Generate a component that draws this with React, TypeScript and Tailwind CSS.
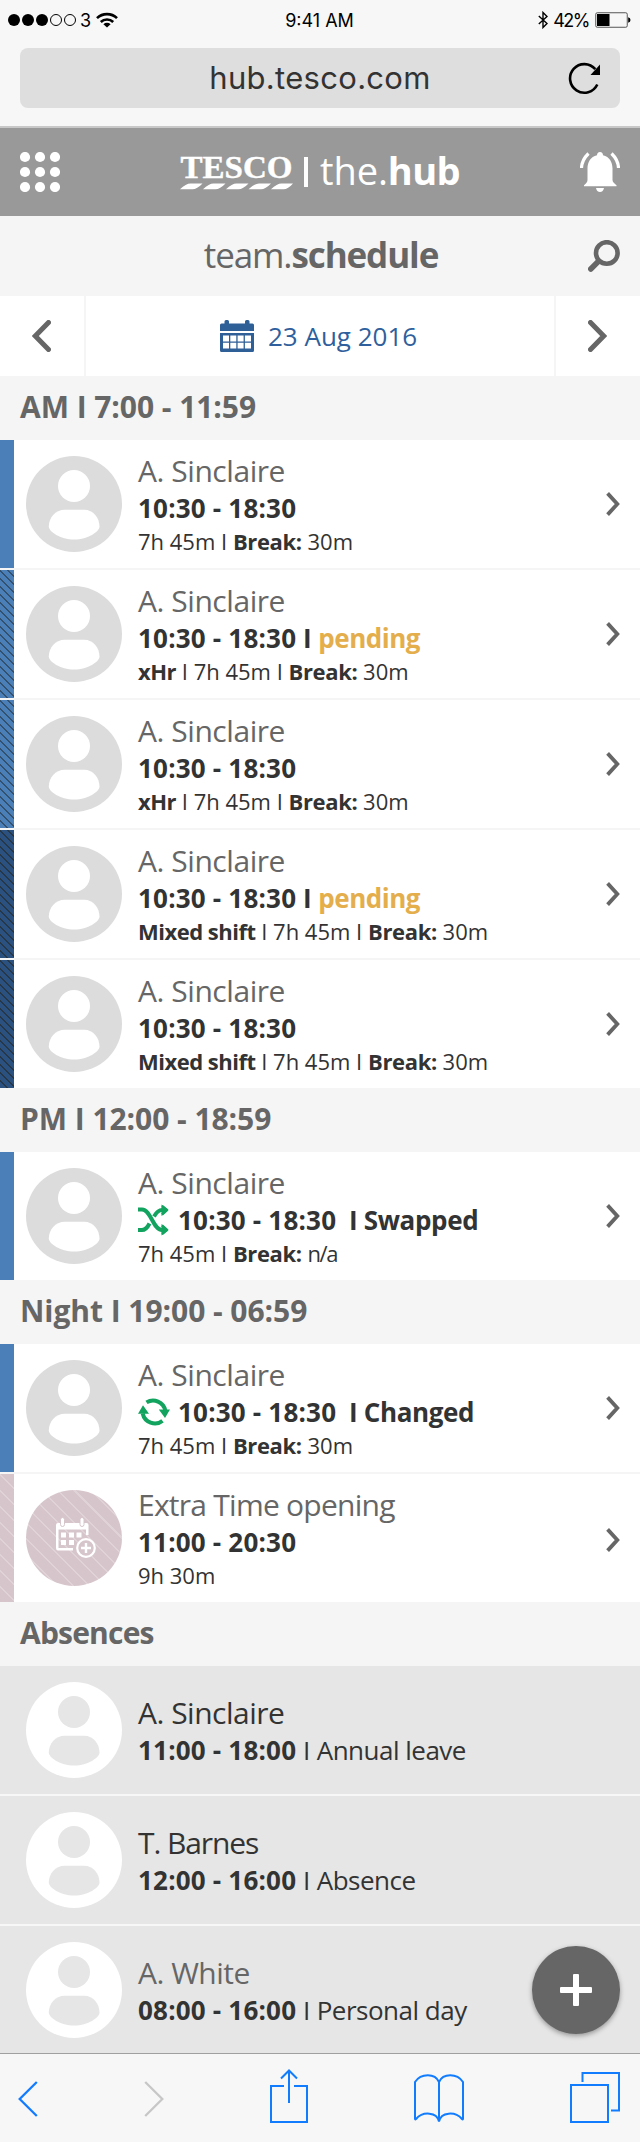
import type { ReactNode } from "react";

type Stripe = "solid" | "hatch" | "dark" | "rose";

const STRIPES: Record<Stripe, string> = {
  solid: "bg-[#4b7fb8]",
  hatch: "bg-[repeating-linear-gradient(45deg,#4b7fb8_0px,#4b7fb8_4.3px,#34506f_4.3px,#34506f_5.66px)]",
  dark: "bg-[repeating-linear-gradient(45deg,#2a5180_0px,#2a5180_4.3px,#263747_4.3px,#263747_5.66px)]",
  rose: "bg-[repeating-linear-gradient(45deg,#d6c5cb_0px,#d6c5cb_9.9px,#e0d3d8_9.9px,#e0d3d8_11.4px)]",
};

function Avatar({ bg, fg }: { bg: string; fg: string }) {
  return (
    <svg width="96" height="96" viewBox="0 0 96 96" className="shrink-0">
      <circle cx="48" cy="48" r="48" fill={bg} />
      <circle cx="48" cy="30" r="16" fill={fg} />
      <path
        d="M39 53.7H58C67.5 53.7 73.5 62 73.5 70.5C73.5 75.5 62 83.5 48.2 83.5C34 83.5 22.8 75.5 22.8 70.5C22.8 62 29 53.7 39 53.7Z"
        fill={fg}
      />
    </svg>
  );
}

function ExtraTimeAvatar() {
  return (
    <div className="flex size-24 shrink-0 items-center justify-center rounded-full bg-[repeating-linear-gradient(45deg,#d6c5cb_0px,#d6c5cb_9.9px,#e0d3d8_9.9px,#e0d3d8_11.4px)]">
      <svg width="42" height="42" viewBox="0 0 42 42" fill="#fff" className="ml-[3px]">
        <path d="M3 6H31.5Q33.5 6 33.5 8V18H31V12.5H3.5V31H18V33.5H3Q1 33.5 1 31V8Q1 6 3 6Z" />
        <rect x="5.5" y="0.5" width="4" height="9" rx="2" stroke="#d6c5cb" strokeWidth="1" />
        <rect x="25" y="0.5" width="4" height="9" rx="2" stroke="#d6c5cb" strokeWidth="1" />
        <path d="M6 15.5h5v5H6zM14 15.5h5v5h-5zM21.5 15.5h5v5h-5zM6 23h5v5H6zM14 23h5v5h-5z" />
        <circle cx="31" cy="31" r="8.8" fill="#d6c5cb" stroke="#fff" strokeWidth="2.2" />
        <path d="M29.8 26h2.4v3.8H36v2.4h-3.8V36h-2.4v-3.8H26v-2.4h3.8z" />
      </svg>
    </div>
  );
}

function Chevron({ low }: { low?: boolean }) {
  return (
    <svg
      width="14"
      height="24"
      viewBox="0 0 14 24"
      fill="none"
      stroke="#666"
      strokeWidth="3.8"
      className={low ? "mt-1 shrink-0" : "shrink-0"}
    >
      <path d="M1.6 1.4L11.3 12L1.6 22.6" />
    </svg>
  );
}

function SectionHeader({ children, tight }: { children: ReactNode; tight?: boolean }) {
  return (
    <h2
      className={
        "flex h-16 items-center bg-[#f5f5f5] pb-1 pl-5 text-[30px] font-bold text-[#666] " +
        (tight ? "tracking-[-0.8px]" : "tracking-[-0.05px]")
      }
    >
      {children}
    </h2>
  );
}

function Shift({
  stripe,
  name = "A. Sinclaire",
  avatar,
  time = "10:30 - 18:30",
  icon,
  status,
  pending,
  detail,
  low,
  last,
}: {
  stripe: Stripe;
  name?: string;
  avatar?: ReactNode;
  time?: string;
  icon?: ReactNode;
  status?: string;
  pending?: boolean;
  detail: ReactNode;
  low?: boolean;
  last?: boolean;
}) {
  return (
    <div className={last ? "flex bg-white" : "flex border-b-2 border-[#f5f5f5] bg-white"}>
      <div className={"h-32 w-3.5 shrink-0 " + STRIPES[stripe]} />
      <div className="flex h-32 flex-1 items-center pr-5 pl-3">
        {avatar ?? <Avatar bg="#dcdcdc" fg="#fff" />}
        <div className="flex h-full flex-1 flex-col pt-[11px] pl-4 whitespace-pre">
          <div
            className={
              "h-[39px] text-[30px] leading-10 text-[#666] " +
              (name.startsWith("Extra") ? "tracking-[-0.75px]" : "tracking-[-0.45px]")
            }
          >
            {name}
          </div>
          <div className="flex text-[26px] leading-9 font-bold text-[#333]">
            {icon}
            <span className="tracking-[0.2px]">{time}</span>
            {pending && (
              <span>
                {" I "}
                <span className="tracking-[-0.5px] text-[#e4ae4c]">pending</span>
              </span>
            )}
            {status && <span className="tracking-[-0.35px]">{"  I " + status}</span>}
          </div>
          <div className="text-[22px] leading-[31px] text-[#333]">{detail}</div>
        </div>
        <Chevron low={low} />
      </div>
    </div>
  );
}

function Detail({ kind, noBreak }: { kind?: string; noBreak?: boolean }) {
  return (
    <>
      {kind && (
        <>
          <b className="tracking-[-0.5px]">{kind}</b>
          {" I "}
        </>
      )}
      {"7h 45m I "}
      <b className="tracking-[-0.35px]">Break:</b>{" "}
      {noBreak ? <span className="tracking-[-1.4px]">n/a</span> : "30m"}
    </>
  );
}

function Absence({
  name,
  time,
  reason,
  muted,
  last,
}: {
  name: string;
  time: string;
  reason: string;
  muted?: boolean;
  last?: boolean;
}) {
  return (
    <div
      className={
        "flex items-center bg-[#e6e6e6] pl-[26px] " + (last ? "h-[127px]" : "h-[130px] border-b-2 border-[#f7f7f7]")
      }
    >
      <Avatar bg="#fff" fg="#e6e6e6" />
      <div className="flex h-full flex-col pt-[27px] pl-4 whitespace-pre">
        <div
          className={
            "h-[39px] text-[30px] leading-10 " +
            (name.startsWith("T.") ? "tracking-[-1.1px] " : "tracking-[-0.5px] ") +
            (muted ? "text-[#666]" : "text-[#333]")
          }
        >
          {name}
        </div>
        <div className="text-[26px] leading-9 text-[#333]">
          <b className="tracking-[0.2px]">{time}</b>
          <span className="tracking-[-0.1px]">{" I "}</span>
          <span className="tracking-[-0.5px]">{reason}</span>
        </div>
      </div>
    </div>
  );
}

const swapIcon = (
  <svg width="31" height="34" viewBox="0 0 31 34" className="mr-[9px]" fill="none" stroke="#12a35f" strokeWidth="4">
    <path d="M0 7.5H4C13 7.5 15 28 24 28H25" />
    <path d="M0 28H4C8 28 10 24.5 11.5 21.5M16 14.5C18 11 20 8 24 8H25" />
    <path d="M23.5 2.5L30.5 8L23.5 14Z M23.5 22L30.5 28L23.5 33.5Z" fill="#12a35f" stroke="none" />
    <path d="M24 4L29 8L24 12.5M24 23.5L29 28L24 32" strokeWidth="2.5" strokeLinejoin="round" />
  </svg>
);

const changeIcon = (
  <svg width="32" height="32" viewBox="0 0 32 32" className="mt-[2px] mr-2" fill="none" stroke="#12a35f" strokeWidth="4">
    <path d="M8.5 6.4A12.5 12.5 0 0 1 27.3 14.5" />
    <path d="M24.5 24.8A12.5 12.5 0 0 1 4.7 17.5" />
    <path d="M20.8 13.5H32L27 22Z M0 17.8L5 9.3L11 17.8Z" fill="#12a35f" stroke="none" />
  </svg>
);

function StatusBar() {
  return (
    <div className="flex h-10 items-center pr-[9px] pl-2 font-[Inter] text-[18px] text-black">
      <div className="flex flex-1 items-center">
        <svg width="68" height="14" viewBox="0 0 68 14">
          <circle cx="6" cy="7" r="6" />
          <circle cx="20" cy="7" r="6" />
          <circle cx="34" cy="7" r="6" />
          <circle cx="48" cy="7" r="5.5" fill="none" stroke="#000" />
          <circle cx="62" cy="7" r="5.5" fill="none" stroke="#000" />
        </svg>
        <span className="ml-1 w-4">3</span>
        <svg width="22" height="16" viewBox="0 0 22 16" fill="none" stroke="#000" strokeWidth="2.6">
          <path d="M1 6.2A14.2 14.2 0 0 1 21 6.2" />
          <path d="M4.8 10A8.8 8.8 0 0 1 17.2 10" />
          <path d="M11 15.5L7.4 12.2A5.2 5.2 0 0 1 14.6 12.2Z" fill="#000" stroke="none" />
        </svg>
      </div>
      <span>9:41 AM</span>
      <div className="flex flex-1 items-center justify-end">
        <svg width="10" height="18" viewBox="0 0 10 18" fill="none" stroke="#000" strokeWidth="1.4">
          <path d="M0.8 5L9 12.5L5 16.5V1.5L9 5.5L0.8 13" />
        </svg>
        <span className="mr-[6px] ml-[5px] tracking-[-1.5px]">42%</span>
        <svg width="36" height="16" viewBox="0 0 36 16">
          <rect x="0.75" y="0.75" width="31.5" height="14.5" rx="1.5" fill="none" stroke="#555" />
          <rect x="2" y="2" width="12.5" height="12" />
          <path d="M33.2 5.2Q35.5 6 35.5 8T33.2 10.8Z" />
        </svg>
      </div>
    </div>
  );
}

export default function App() {
  return (
    <div className="flex w-[640px] flex-col bg-[#f5f5f5] font-['Open_Sans',sans-serif]">
      <div className="flex h-32 flex-col border-b-2 border-[#c8c8c8] bg-[#f7f7f7]">
        <StatusBar />
        <div className="mx-5 mt-2 flex h-[60px] items-center rounded-lg bg-[#dedede] px-5 font-[Inter]">
          <span className="w-8" />
          <span className="flex-1 text-center text-[31px] tracking-[0.3px] text-[#333]">hub.tesco.com</span>
          <svg width="32" height="34" viewBox="0 0 32 34" fill="none" stroke="#000" strokeWidth="2.6">
            <path d="M29.3 23.5A14.3 14.3 0 1 1 27.3 8.2" />
            <path d="M32 3.5V14H22.5Z" fill="#000" stroke="none" />
          </svg>
        </div>
      </div>

      <header className="flex h-[88px] items-center justify-between bg-[#999] px-5 text-white">
        <svg width="40" height="40" viewBox="0 0 40 40" fill="#fff">
          {[5, 20, 35].map((y) => [5, 20, 35].map((x) => <circle key={`${x}-${y}`} cx={x} cy={y} r="5.1" />))}
        </svg>
        <div className="flex h-full items-center">
          <svg width="113" height="42" viewBox="0 -4 113 42" fill="#fff" className="overflow-visible">
            <text
              x="0.5"
              y="22.6"
              textLength="112"
              lengthAdjust="spacingAndGlyphs"
              className="font-['Liberation_Serif',serif] text-[31px] font-bold"
              stroke="#fff"
              strokeWidth="0.4"
            >
              TESCO
            </text>
            <path d="M0 34.3Q6 28.500 10.500 28.500H22.500Q17 34.3 12.500 34.3ZM23 34.3Q29 28.500 33.500 28.500H45.500Q40 34.3 35.500 34.3ZM46 34.3Q52 28.500 56.500 28.500H68.500Q63 34.3 58.500 34.3ZM68.500 34.3Q74.500 28.500 79 28.500H91Q85.500 34.3 81 34.3ZM91 34.3Q97 28.500 101.500 28.500H113Q108 34.3 103.500 34.3Z" />
          </svg>
          <div className="mr-3 ml-[11px] h-[30px] w-1 bg-white" />
          <div className="pb-1 text-[38px] leading-none tracking-[-0.1px]">
            the.<b className="tracking-[-0.6px]">hub</b>
          </div>
        </div>
        <svg width="40" height="40" viewBox="0 0 40 40" fill="#fff">
          <path d="M20 0C22 0 23 1.300 23 3.200C29.500 4.800 32.500 10 32.500 16.500V28C32.500 30 34.500 31.500 36.500 33.200V34.200H4V33.200C6 31.500 7.500 30 7.500 28V16.500C7.500 10 10.500 4.800 17 3.200C17 1.300 18 0 20 0Z" />
          <path d="M16 36H24Q23.200 40 20 40T16 36Z" />
          <path d="M8.500 1.500Q1.800 8 1.500 16M31.500 1.500Q38.200 8 38.500 16" fill="none" stroke="#fff" strokeWidth="3.200" />
        </svg>
      </header>

      <div className="flex h-20 items-center bg-[#f5f5f5] px-5 text-[#666]">
        <span className="w-8" />
        <h1 className="flex-1 pb-1 pl-0.5 text-center text-[35px] leading-none tracking-[-1.1px]">
          team.<b>schedule</b>
        </h1>
        <svg width="32" height="32" viewBox="0 0 32 32" fill="none" stroke="#666">
          <circle cx="18.800" cy="13" r="10.800" strokeWidth="4.600" />
          <path d="M10.500 21.300L2.800 29" strokeWidth="5.600" strokeLinecap="round" />
        </svg>
      </div>

      <div className="flex h-20 items-stretch bg-white">
        <div className="flex w-[86px] items-center border-r-2 border-[#f5f5f5] pl-8">
          <svg width="19" height="32" viewBox="0 0 19 32" fill="none" stroke="#666" strokeWidth="5">
            <path d="M16.500 2.500L3.300 16L16.500 29.500" strokeLinecap="round" />
          </svg>
        </div>
        <div className="flex flex-1 items-center pl-[134px] text-[#2f5f9c]">
          <svg width="34" height="32" viewBox="0 0 34 32" fill="#2f5f97">
            <path d="M1.500 3.500H4.500V1.500Q4.500 0 6 0H7.500Q9 0 9 1.500V3.500H25V1.500Q25 0 26.500 0H28Q29.500 0 29.500 1.500V3.500H32.500Q34 3.500 34 5V11H0V5Q0 3.500 1.500 3.500Z" />
            <path
              fillRule="evenodd"
              d="M0 13H34V30.500Q34 32 32.500 32H1.500Q0 32 0 30.500ZM3 15.500V21.500H9V15.500ZM10.300 15.500V21.500H16.300V15.500ZM17.600 15.500V21.500H23.600V15.500ZM24.900 15.500V21.500H31V15.500ZM3 22.800V28.500H9V22.800ZM10.300 22.800V28.500H16.300V22.800ZM17.600 22.800V28.500H23.600V22.800ZM24.900 22.800V28.500H31V22.800Z"
            />
          </svg>
          <span className="ml-[14px] text-[26px]">23 Aug 2016</span>
        </div>
        <div className="flex w-[86px] items-center border-l-2 border-[#f5f5f5] pl-8">
          <svg width="19" height="32" viewBox="0 0 19 32" fill="none" stroke="#666" strokeWidth="5">
            <path d="M2.500 2.500L15.700 16L2.500 29.500" strokeLinecap="round" />
          </svg>
        </div>
      </div>

      <SectionHeader>AM I 7:00 - 11:59</SectionHeader>
      <Shift stripe="solid" detail={<Detail />} />
      <Shift stripe="hatch" pending detail={<Detail kind="xHr" />} />
      <Shift stripe="hatch" detail={<Detail kind="xHr" />} />
      <Shift stripe="dark" pending detail={<Detail kind="Mixed shift" />} />
      <Shift stripe="dark" detail={<Detail kind="Mixed shift" />} last />

      <SectionHeader>PM I 12:00 - 18:59</SectionHeader>
      <Shift stripe="solid" icon={swapIcon} status="Swapped" detail={<Detail noBreak />} last />

      <SectionHeader>Night I 19:00 - 06:59</SectionHeader>
      <Shift stripe="solid" icon={changeIcon} status="Changed" detail={<Detail />} />
      <Shift
        stripe="rose"
        name="Extra Time opening"
        avatar={<ExtraTimeAvatar />}
        time="11:00 - 20:30"
        detail="9h 30m"
        low
        last
      />

      <SectionHeader tight>Absences</SectionHeader>
      <Absence name="A. Sinclaire" time="11:00 - 18:00" reason="Annual leave" />
      <Absence name="T. Barnes" time="12:00 - 16:00" reason="Absence" />
      <div className="relative">
        <Absence name="A. White" time="08:00 - 16:00" reason="Personal day" muted last />
        <button className="absolute top-5 right-5 flex size-[88px] items-center justify-center rounded-full bg-[#666] shadow-[0_2px_5px_rgba(0,0,0,0.35)]">
          <svg width="32" height="32" viewBox="0 0 32 32" fill="#fff">
            <rect x="13" y="0" width="6" height="32" rx="1" />
            <rect x="0" y="13" width="32" height="6" rx="1" />
          </svg>
        </button>
      </div>

      <nav className="flex h-[89px] items-start justify-between border-t border-[#a0a0a0] bg-[#f7f7f7] pr-5 pl-[18px]">
        <svg width="20" height="36" viewBox="0 0 20 36" className="mt-[27px]" fill="none" stroke="#127cff" strokeWidth="2.300">
          <path d="M18.800 1L1.700 18L18.800 35" />
        </svg>
        <svg width="20" height="36" viewBox="0 0 20 36" className="mt-[27px]" fill="none" stroke="#c7c7c7" strokeWidth="2.300">
          <path d="M1.200 1L18.300 18L1.200 35" />
        </svg>
        <svg width="38" height="54" viewBox="0 0 38 54" className="mt-[15px]" fill="none" stroke="#127cff" strokeWidth="2">
          <path d="M14 17H1V53H37V17H24M19 34V1.500M11 9.500L19 1.500L27 9.500" />
        </svg>
        <svg width="50" height="49" viewBox="0 0 50 49" className="mt-[20px]" fill="none" stroke="#127cff" strokeWidth="2">
          <path d="M25 8V47.500C23 38 9 37 2 45Q1 46 1 44.500V8C7 -1 21 -1 25 8ZM25 47.500C27 38 41 37 48 45Q49 46 49 44.500V8C43 -1 29 -1 25 8" />
        </svg>
        <svg width="50" height="51" viewBox="0 0 50 51" className="mt-[18px]" fill="none" stroke="#127cff" strokeWidth="2">
          <path d="M1 13H38V50H1ZM12.500 10V1H49V38.500H41" />
        </svg>
      </nav>
    </div>
  );
}
